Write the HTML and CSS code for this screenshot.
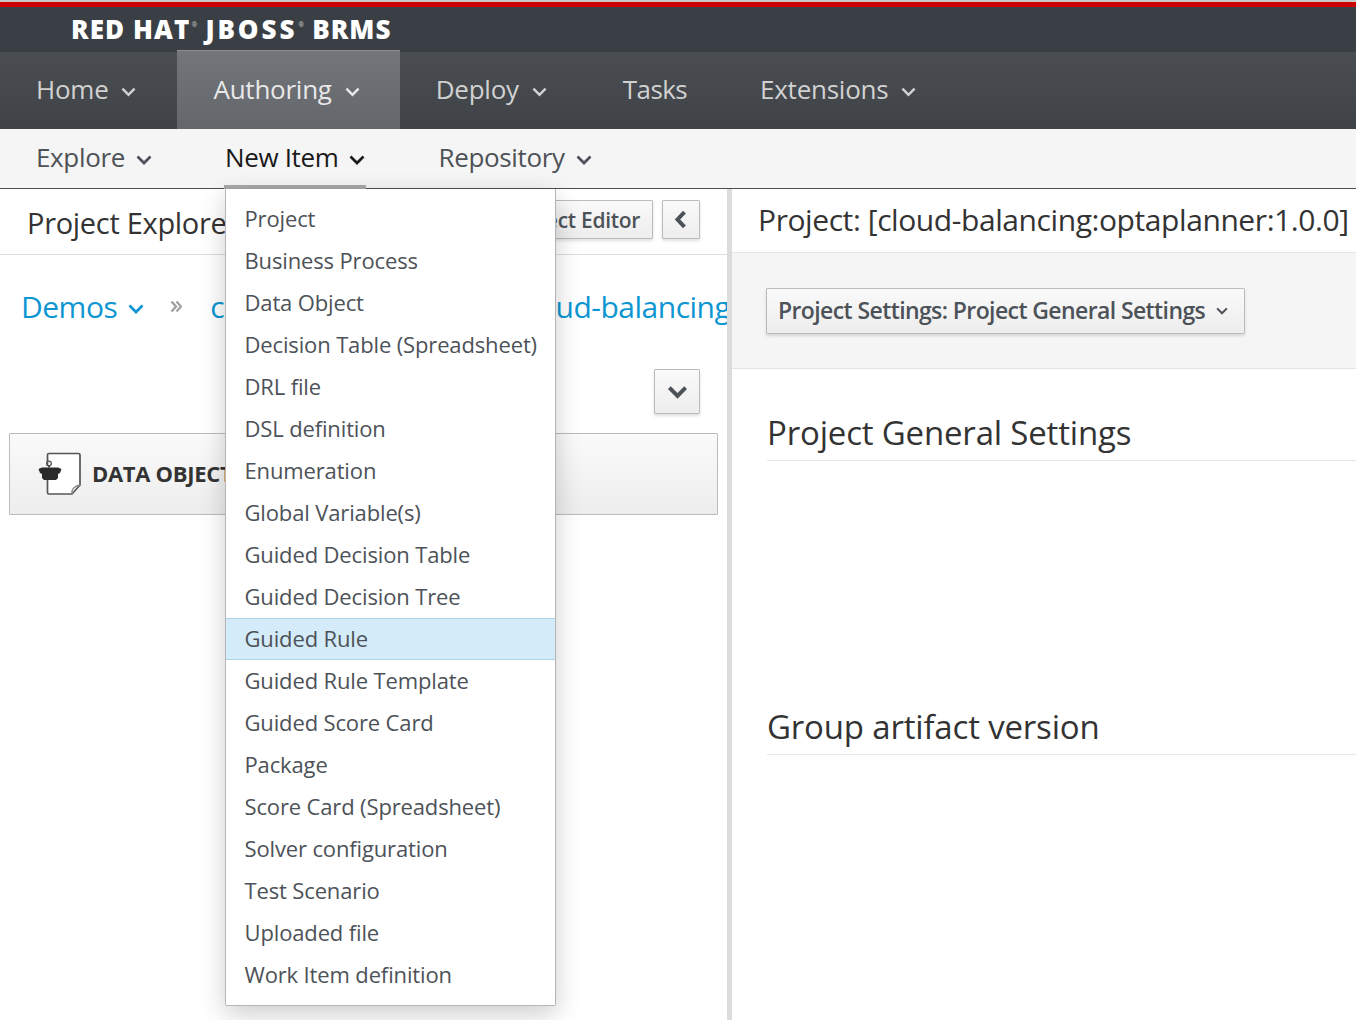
FILE: index.html
```html
<!DOCTYPE html>
<html lang="en">
<head>
<meta charset="utf-8">
<title>Red Hat JBoss BRMS</title>
<link rel="stylesheet" href="styles.css">
</head>
<body>
<svg class="defs" width="0" height="0" aria-hidden="true">
  <symbol id="chev" viewBox="0 0 16 10"><path d="M1.500 1.500 8 8l6.500-6.500" fill="none" stroke="currentColor" stroke-width="2.700"/></symbol>
  <symbol id="chev-bold" viewBox="0 0 22 14"><path d="M2.500 2.500 11 11l8.500-8.500" fill="none" stroke="currentColor" stroke-width="4.200"/></symbol>
</svg>
<div class="app">
  <header class="brand"><span class="logo"><span class="l1">RED HAT</span><sup>®</sup><span class="l2">JBOSS</span><sup>®</sup><span class="l3">BRMS</span></span></header>
  <nav class="mainnav">
    <a class="tab tab-home">Home<svg class="c"><use href="#chev"/></svg></a>
    <a class="tab tab-active">Authoring<svg class="c"><use href="#chev"/></svg></a>
    <a class="tab">Deploy<svg class="c"><use href="#chev"/></svg></a>
    <a class="tab tab-plain">Tasks</a>
    <a class="tab">Extensions<svg class="c"><use href="#chev"/></svg></a>
  </nav>
  <nav class="subnav">
    <a class="sub">Explore<svg class="c"><use href="#chev"/></svg></a>
    <a class="sub sub-open">New Item<svg class="c"><use href="#chev"/></svg></a>
    <a class="sub">Repository<svg class="c"><use href="#chev"/></svg></a>
  </nav>
  <main class="panes">
    <section class="left">
      <div class="left-head">
        <h2 class="left-title">Project Explorer</h2>
        <div class="head-tools">
          <button class="btn btn-editor">Open Project Editor</button>
          <button class="btn btn-icon"><svg class="ci" viewBox="0 0 14 22"><path d="M11 2.500 3 11l8 8.500" fill="none" stroke="currentColor" stroke-width="4.600"/></svg></button>
        </div>
      </div>
      <div class="crumbs">
        <a class="crumb">Demos<svg class="c"><use href="#chev"/></svg></a>
        <svg class="sep" viewBox="0 0 12 13"><path d="M1.500 1.500 6 6.500l-4.500 5M6.500 1.500l4.500 5-4.500 5" fill="none" stroke="currentColor" stroke-width="2.300"/></svg>
        <a class="crumb crumb-clip">c</a>
        <a class="crumb crumb-last">cloud-balancing</a>
      </div>
      <div class="tools-row"><button class="btn btn-down"><svg class="cd"><use href="#chev-bold"/></svg></button></div>
      <div class="acc">
        <svg class="doc" viewBox="0 0 44 44">
          <path d="M10.500 14V3a1.500 1.500 0 0 1 1.500-1.500h29.500A1.500 1.500 0 0 1 43 3v30l-8 9H12a1.500 1.500 0 0 1-1.500-1.500V27" fill="#fff" stroke="#555" stroke-width="1.700"/>
          <path d="M35 42c-1-4 2-8 8-9" fill="none" stroke="#888" stroke-width="1.500"/>
          <path d="M1.500 17 5 15.500h16l3.500 1.500-1.500 4-2 1v4l-2 2H7l-2-2v-4l-2-1z" fill="#2a2a2a"/>
          <path d="M12 15.500v-2" stroke="#444" stroke-width="2"/>
          <circle cx="12" cy="11.500" r="2.300" fill="none" stroke="#555" stroke-width="1.300"/>
        </svg>
        <span class="acc-label">DATA OBJECTS</span>
      </div>
    </section>
    <section class="right">
      <h1 class="right-title">Project: [cloud-balancing:optaplanner:1.0.0]</h1>
      <div class="band">
        <button class="btn btn-settings">Project Settings: Project General Settings<svg class="cs"><use href="#chev"/></svg></button>
      </div>
      <h2 class="section first">Project General Settings</h2>
      <h2 class="section second">Group artifact version</h2>
    </section>
  </main>
  <ul class="menu">
    <li>Project</li>
    <li>Business Process</li>
    <li>Data Object</li>
    <li>Decision Table (Spreadsheet)</li>
    <li>DRL file</li>
    <li>DSL definition</li>
    <li>Enumeration</li>
    <li>Global Variable(s)</li>
    <li>Guided Decision Table</li>
    <li>Guided Decision Tree</li>
    <li class="hover">Guided Rule</li>
    <li>Guided Rule Template</li>
    <li>Guided Score Card</li>
    <li>Package</li>
    <li>Score Card (Spreadsheet)</li>
    <li>Solver configuration</li>
    <li>Test Scenario</li>
    <li>Uploaded file</li>
    <li>Work Item definition</li>
  </ul>
</div>
</body>
</html>
```

FILE: styles.css
```css
* { box-sizing: border-box; }
html, body { margin: 0; padding: 0; height: 100%; }
body { font-family: "Open Sans", "Noto Sans", sans-serif; background: #fff; color: #333; overflow: hidden; }
.defs { position: absolute; }
.app { position: relative; width: 1356px; height: 1020px; overflow: hidden; display: flex; flex-direction: column; }

.brand { height: 52px; flex: none; background: #3a3f45; border-top: 2px solid #c8c8c8; padding-left: 71px; }
.brand::before { content: ""; display: block; height: 5px; margin-left: -71px; background: #cc0000; }
.logo { display: block; font-weight: 800; font-size: 26px; line-height: 45px; color: #fff; white-space: nowrap; }
.l1 { letter-spacing: 1.1px; }
.l2 { letter-spacing: 2.9px; }
.l3 { letter-spacing: 1px; }
.logo sup { font-size: 7px; font-weight: 400; vertical-align: 12px; line-height: 0; margin: 0 8px 0 1px; color: #ccc; }

.mainnav { height: 77px; flex: none; display: flex; background: linear-gradient(#4a4e53, #3f4347); }
.tab { display: flex; align-items: center; padding: 0 40px 4px 36px; font-size: 26px; letter-spacing: -.25px; color: #d1d1d1; }
.tab-home { padding-right: 41px; }
.tab-plain { padding-right: 37px; letter-spacing: -.6px; }
.tab-active { background: linear-gradient(#72757a, #63666b); border-top: 1px solid #8b8d90; margin-top: -2px; height: 79px; padding-top: 1px; padding-bottom: 3px; padding-right: 40px; color: #e8e8e8; }
.tab .c { width: 15px; height: 10px; margin-left: 13px; margin-top: 6px; }

.subnav { height: 60px; flex: none; display: flex; gap: 73px; padding-left: 36px; background: #f5f5f5; border-bottom: 1px solid #4b4f54; }
.sub { display: flex; align-items: center; font-size: 26px; letter-spacing: -.35px; color: #4d5258; height: 59px; padding-bottom: 4px; }
.sub .c { width: 16px; height: 10px; margin-left: 11px; margin-top: 6px; }
.sub-open { color: #1a1a1a; position: relative; }
.sub-open::after { content: ""; position: absolute; left: -1px; right: -1px; bottom: -1px; height: 4px; background: #a8a8a8; }

.panes { flex: 1; display: flex; min-height: 0; }
.left { width: 727px; flex: none; overflow: hidden; }
.left-head { height: 66px; display: flex; justify-content: space-between; padding: 11px 27px 0 27px; border-bottom: 1px solid #dedede; }
.left-title { margin: 0; font-size: 29px; font-weight: 400; letter-spacing: -.3px; line-height: 46px; color: #333; white-space: nowrap; }
.head-tools { display: flex; gap: 9px; height: 39px; }
.btn { font-family: inherit; border: 1px solid #bbb; border-radius: 1px; background: linear-gradient(#fafafa, #ededed); color: #4d5258; box-shadow: 0 2px 3px rgba(0,0,0,.12); padding: 0; }
.btn-editor { font-size: 21px; font-weight: 600; letter-spacing: -.3px; white-space: nowrap; padding: 0 12px; }
.btn-icon { width: 38px; display: flex; align-items: center; justify-content: center; }
.ci { width: 12px; height: 19px; }
.crumbs { display: flex; align-items: center; height: 44px; margin-top: 29px; padding-left: 21px; font-size: 30px; letter-spacing: -.5px; color: #0d96d2; white-space: nowrap; }
.crumb { display: flex; align-items: center; }
.crumb .c { width: 16px; height: 10px; margin-left: 11px; margin-top: 6px; }
.sep { width: 12px; height: 13px; color: #a0a0a0; margin: 0 0 0 26px; flex: none; }
.crumb-clip { width: 15px; margin-left: 28px; }
.crumb-last { margin-left: 293px; }
.tools-row { display: flex; justify-content: flex-end; padding-right: 27px; margin-top: 41px; }
.btn-down { width: 46px; height: 45px; display: flex; align-items: center; justify-content: center; }
.cd { width: 21px; height: 14px; }
.acc { display: flex; align-items: center; margin: 19px 9px 0; height: 82px; border: 1px solid #bbb; border-radius: 1px; background: linear-gradient(#fafafa, #ededed); padding-left: 27px; }
.doc { width: 44px; height: 44px; flex: none; }
.acc-label { margin-left: 11px; padding-bottom: 2px; font-size: 22px; font-weight: 700; letter-spacing: -.3px; color: #333; white-space: nowrap; }

.right { flex: 1; min-width: 0; border-left: 5px solid #dcdcdc; overflow: hidden; }
.right-title { margin: 0; height: 64px; padding: 8px 0 0 26px; font-size: 30px; font-weight: 400; line-height: 46px; letter-spacing: -.42px; color: #333; white-space: nowrap; border-bottom: 1px solid #e6e6e6; }
.band { height: 116px; background: #f5f5f5; border-bottom: 1px solid #e4e4e4; padding: 35px 0 0 34px; }
.btn-settings { display: flex; align-items: center; height: 46px; width: 479px; padding-left: 11px; padding-bottom: 2px; font-size: 23px; font-weight: 600; letter-spacing: -.6px; white-space: nowrap; }
.cs { width: 12px; height: 8px; margin-left: 11px; margin-top: 2px; }
.section { margin: 0 0 0 35px; font-size: 33px; font-weight: 400; line-height: 46px; letter-spacing: -.18px; color: #333; height: 61px; border-bottom: 1px solid #e6e6e6; white-space: nowrap; padding-top: 10px; }
.first { margin-top: 31px; }
.second { margin-top: 233px; }

.menu { position: absolute; left: 225px; top: 189px; width: 331px; height: 817px; margin: 0; padding: 9px 0; list-style: none; background: #fff; border: 1px solid #b5b5b5; border-top: 0; border-radius: 0 0 2px 2px; box-shadow: 0 8px 26px rgba(0,0,0,.2); }
.menu li { height: 42px; line-height: 40px; padding-left: 18.500px; font-size: 22px; letter-spacing: -.14px; color: #4d5258; white-space: nowrap; }
.menu .hover { background: #d4ebf9; border-top: 1px solid #aed2e8; border-bottom: 1px solid #aed2e8; line-height: 38px; }
```
